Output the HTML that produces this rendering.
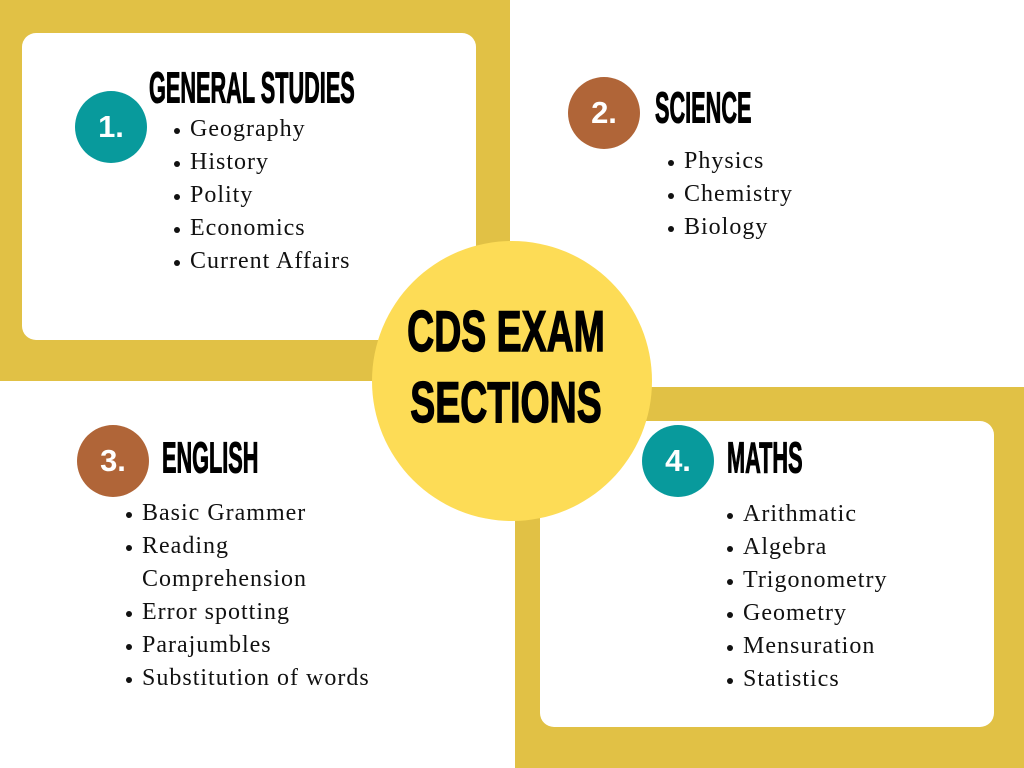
<!DOCTYPE html>
<html><head><meta charset="utf-8"><style>
body{margin:0;width:1024px;height:768px;position:relative;overflow:hidden;background:#fff;}
.a{position:absolute;}
.y{background:#e1c145;}
.card{background:#fff;border-radius:14px;}
.c{border-radius:50%;color:#fff;font-family:"Liberation Sans",sans-serif;font-weight:bold;font-size:31px;display:flex;align-items:center;justify-content:center;width:72px;height:72px;}
.teal{background:#089a9c;}.brown{background:#b06538;}
.t{font-family:"Liberation Sans Narrow","Liberation Sans",sans-serif;font-weight:bold;font-size:31px;line-height:1;transform-origin:left top;transform:scale(0.7,1.4);white-space:nowrap;color:#000;-webkit-text-stroke:0.8px #000;}
.l{font-family:"Liberation Serif",serif;font-size:24px;letter-spacing:1px;line-height:33px;color:#111;white-space:nowrap;}
.l div{position:relative;padding-left:0;}
.l div::before{content:"";position:absolute;left:-16px;top:15px;width:6px;height:6px;border-radius:50%;background:#111;}
</style></head><body>
<div class="a y" style="left:0;top:0;width:510px;height:381px"></div>
<div class="a card" style="left:22px;top:33px;width:454px;height:307px"></div>
<div class="a y" style="left:515px;top:387px;width:509px;height:381px"></div>
<div class="a card" style="left:540px;top:421px;width:454px;height:306px"></div>
<div class="a" style="left:372px;top:241px;width:280px;height:280px;border-radius:50%;background:#fddc56"></div>
<div class="a t" style="left:349px;top:304px;width:314px;text-align:center;font-size:48px;transform-origin:center top;transform:scale(0.78,1.2);-webkit-text-stroke:1.2px #000">CDS EXAM</div>
<div class="a t" style="left:349px;top:375px;width:314px;text-align:center;font-size:48px;transform-origin:center top;transform:scale(0.78,1.2);-webkit-text-stroke:1.2px #000">SECTIONS</div>

<div class="a c teal" style="left:75px;top:91px">1.</div>
<div class="a t" style="left:149px;top:66px">GENERAL STUDIES</div>
<div class="a l" style="left:190px;top:113px"><div>Geography</div><div>History</div><div>Polity</div><div>Economics</div><div>Current Affairs</div></div>

<div class="a c brown" style="left:568px;top:77px">2.</div>
<div class="a t" style="left:655px;top:86px">SCIENCE</div>
<div class="a l" style="left:684px;top:145px"><div>Physics</div><div>Chemistry</div><div>Biology</div></div>

<div class="a c brown" style="left:77px;top:425px">3.</div>
<div class="a t" style="left:162px;top:436px">ENGLISH</div>
<div class="a l" style="left:142px;top:497px;line-height:33px"><div>Basic Grammer</div><div>Reading<br>Comprehension</div><div>Error spotting</div><div>Parajumbles</div><div>Substitution of words</div></div>

<div class="a c teal" style="left:642px;top:425px">4.</div>
<div class="a t" style="left:727px;top:436px">MATHS</div>
<div class="a l" style="left:743px;top:498px"><div>Arithmatic</div><div>Algebra</div><div>Trigonometry</div><div>Geometry</div><div>Mensuration</div><div>Statistics</div></div>
</body></html>
